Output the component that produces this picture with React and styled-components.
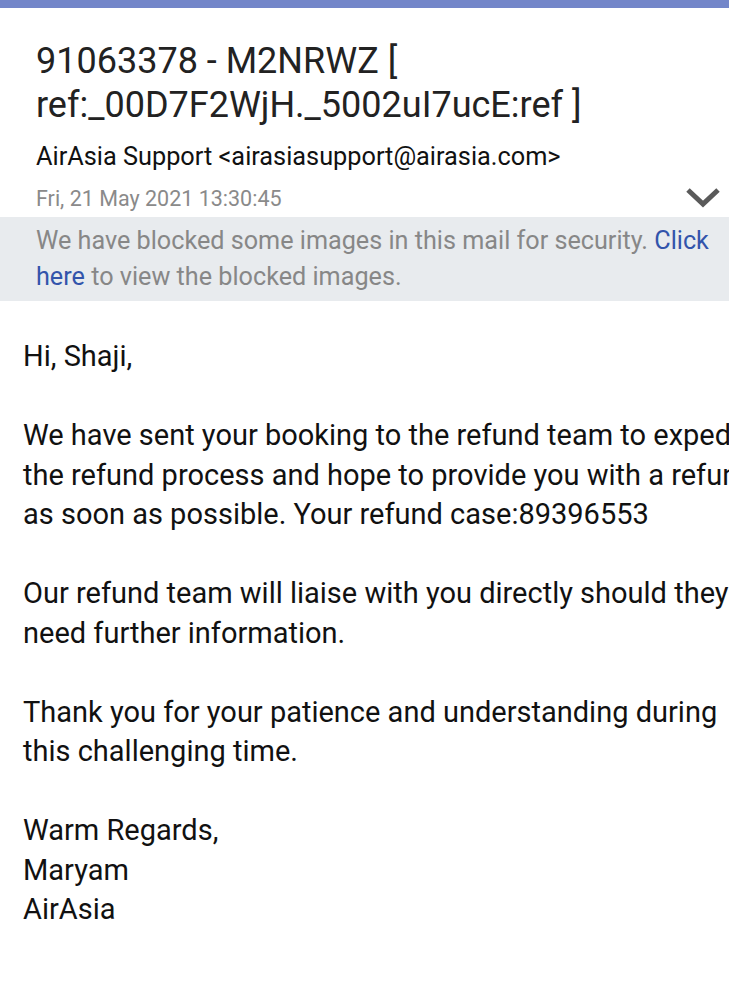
import React from "react";
import styled, { createGlobalStyle } from "styled-components";

const Global = createGlobalStyle`
  html, body { margin: 0; padding: 0; background: #ffffff; }
  body { font-family: Roboto, "Noto Sans", "Liberation Sans", sans-serif; overflow: hidden; }
`;

const Page = styled.div`
  width: 729px;
  min-height: 1000px;
  overflow: hidden;
  background: #ffffff;
`;

const TopBar = styled.div`
  height: 8px;
  background: #7386c9;
`;

const Header = styled.div`
  padding: 31px 36px 0 36px;
`;

const Title = styled.h1`
  margin: 0;
  font-weight: 400;
  font-size: 36px;
  line-height: 44px;
  color: #222;
`;

const Sender = styled.div`
  margin-top: 15px;
  font-size: 25.3px;
  line-height: 30px;
  color: #111;
`;

const DateRow = styled.div`
  display: flex;
  align-items: center;
  justify-content: space-between;
  height: 30px;
  margin-top: 11px;
  margin-right: -29px;
`;

const DateText = styled.span`
  font-size: 21.5px;
  color: #8a8a8a;
`;

const Chevron = styled.svg`
  width: 38px;
  height: 22px;
  margin-top: -2px;
`;

const Banner = styled.div`
  margin-top: 4px;
  background: #e8ebee;
  padding: 6px 10px 6px 36px;
  font-size: 25.2px;
  line-height: 36px;
  color: #878787;
  white-space: nowrap;
`;

const Link = styled.span`
  color: #3254ab;
`;

const Body = styled.div`
  padding: 36px 0 0 23px;
  color: #111;
  font-size: 29px;
  line-height: 39.5px;
`;

const Line = styled.div`
  white-space: nowrap;
  min-height: 39.5px;
`;

const lines = [
  "Hi, Shaji,",
  "",
  "We have sent your booking to the refund team to expedite",
  "the refund process and hope to provide you with a refund",
  "as soon as possible. Your refund case:89396553",
  "",
  "Our refund team will liaise with you directly should they",
  "need further information.",
  "",
  "Thank you for your patience and understanding during",
  "this challenging time.",
  "",
  "Warm Regards,",
  "Maryam",
  "AirAsia",
];

export default function App() {
  return (
    <Page>
      <Global />
      <TopBar />
      <Header>
        <Title>
          91063378 - M2NRWZ [<br />
          ref:_00D7F2WjH._5002uI7ucE:ref ]
        </Title>
        <Sender>AirAsia Support &lt;airasiasupport@airasia.com&gt;</Sender>
        <DateRow>
          <DateText>Fri, 21 May 2021 13:30:45</DateText>
          <Chevron viewBox="0 0 38 22" fill="none">
            <path d="M4 4 L19 18 L34 4" stroke="#5a5a5a" strokeWidth="5" strokeLinecap="butt" strokeLinejoin="miter" />
          </Chevron>
        </DateRow>
      </Header>
      <Banner>
        We have blocked some images in this mail for security. <Link>Click</Link>
        <br />
        <Link>here</Link> to view the blocked images.
      </Banner>
      <Body>
        {lines.map((l, i) => (
          <Line key={i}>{l}</Line>
        ))}
      </Body>
    </Page>
  );
}
